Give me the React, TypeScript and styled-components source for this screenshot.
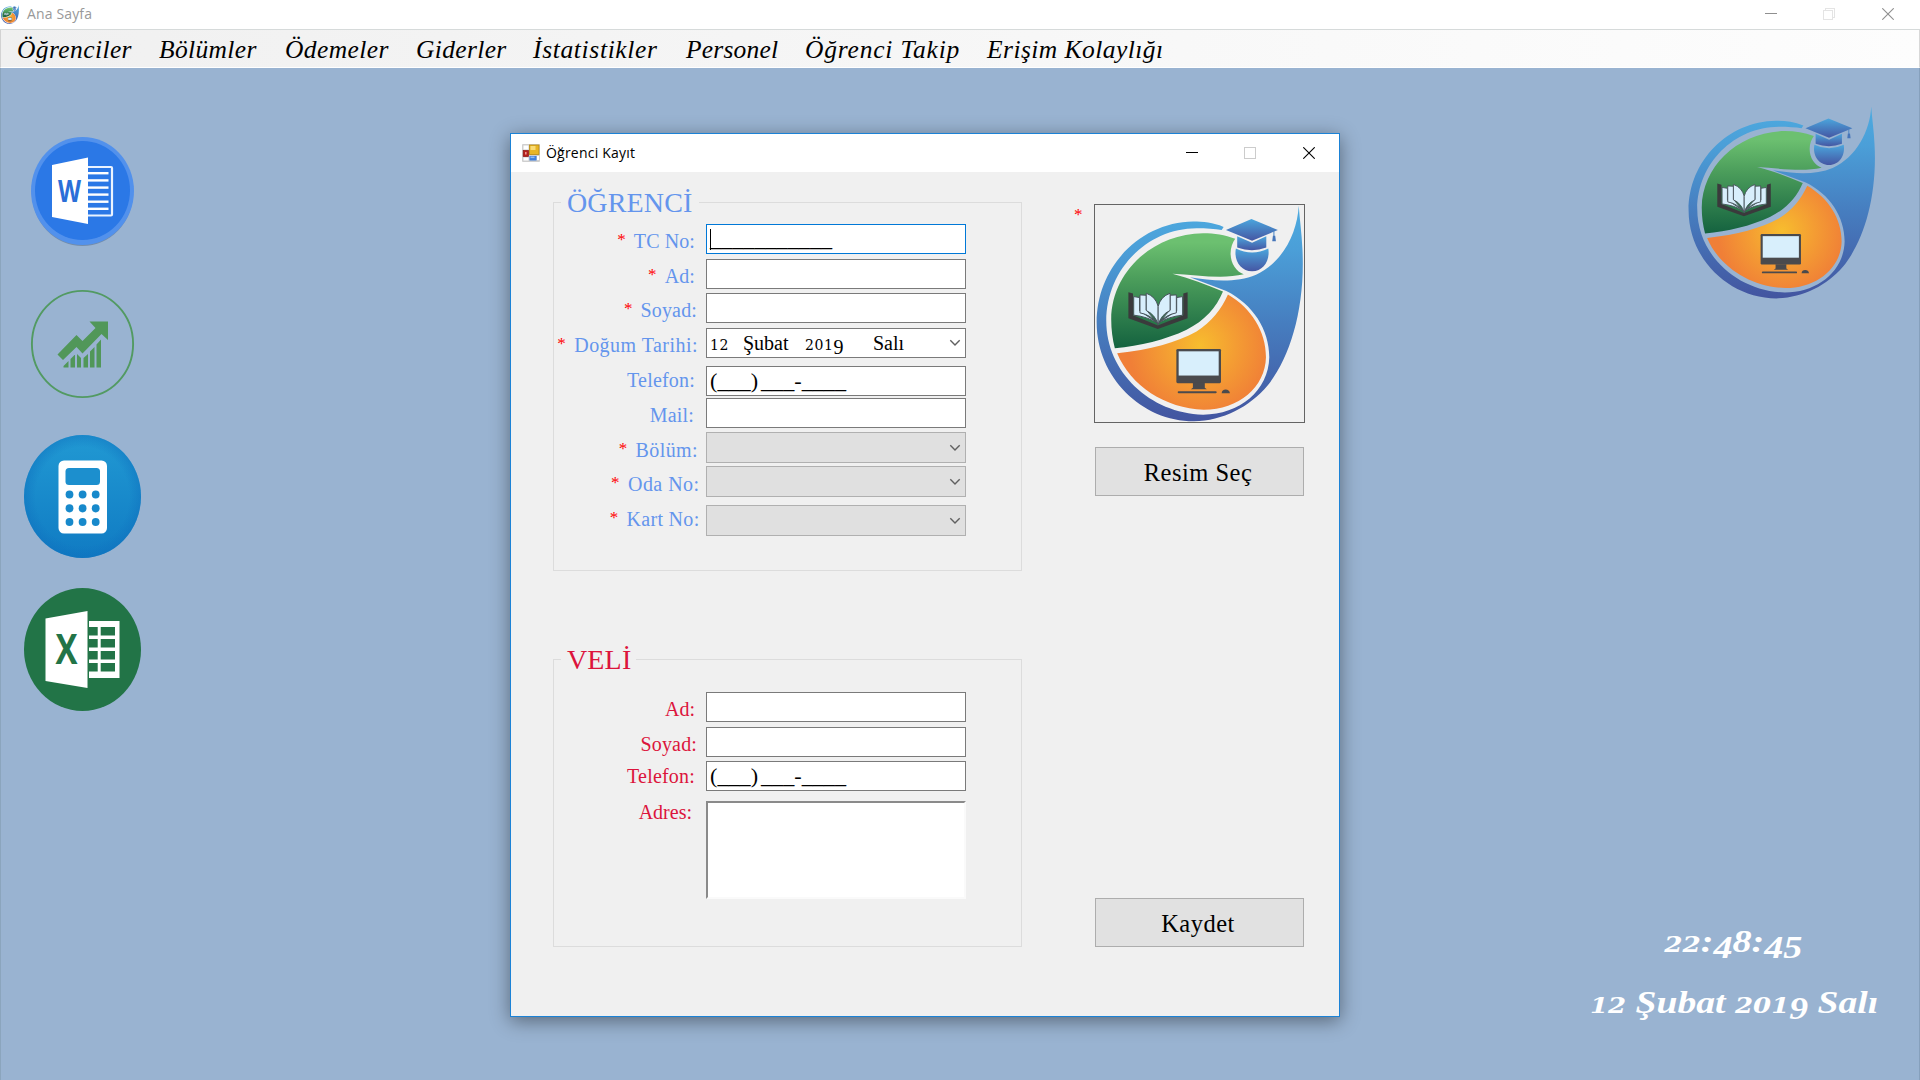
import React from "react";
import styled, { createGlobalStyle } from "styled-components";

const serif = `"Liberation Serif", "Times New Roman", serif`;
const sans = `"Open Sans", "Noto Sans", sans-serif`;

const GlobalStyle = createGlobalStyle`
  * { box-sizing: border-box; }
  body { margin: 0; background: #99b3d1; overflow: hidden; }
`;

const Screen = styled.div`
  width: 1920px;
  height: 1080px;
  display: flex;
  flex-direction: column;
  font-family: ${serif};
  background: #99b3d1;
  overflow: hidden;
`;

const MainTitleBar = styled.header`
  display: flex;
  align-items: center;
  height: 30px;
  padding: 0 3px 1px 1px;
  background: #fff;
  border-bottom: 1px solid #d6dada;
`;

const TitleText = styled.span<{ $color: string; $gap: number; $spacing: number }>`
  flex: 1;
  margin-left: ${(p) => p.$gap}px;
  padding-bottom: 1px;
  font-family: ${sans};
  font-size: 14px;
  letter-spacing: ${(p) => p.$spacing}px;
  color: ${(p) => p.$color};
`;

const WindowButton = styled.span`
  width: 58.5px;
  height: 100%;
  display: flex;
  align-items: center;
  justify-content: center;
`;

const MenuBar = styled.nav`
  display: flex;
  align-items: center;
  height: 38px;
  padding: 2px 0 0 16px;
  border-left: 1px solid #d2d2d2;
  border-right: 1px solid #d8d8d8;
  border-bottom: 1px solid #fff;
  background: linear-gradient(90deg, #f0f0f0, #fdfdfd);
`;

const MenuItem = styled.span<{ $width: number; $spacing: number }>`
  width: ${(p) => p.$width}px;
  white-space: nowrap;
  font-size: 25.5px;
  font-style: italic;
  line-height: 34px;
  letter-spacing: ${(p) => p.$spacing}px;
  color: #000;
`;

const Desktop = styled.main`
  position: relative;
  flex: 1;
  display: flex;
  justify-content: space-between;
  border-left: 1px solid #8ba5bd;
  border-right: 1px solid #86a0bc;
`;

const Shortcuts = styled.aside`
  display: flex;
  flex-direction: column;
  align-items: center;
  width: 163px;
  padding-top: 69px;
`;

const Shortcut = styled.div<{ $w: number; $h: number; $after: number }>`
  width: ${(p) => p.$w}px;
  height: ${(p) => p.$h}px;
  margin-bottom: ${(p) => p.$after}px;
  svg { display: block; width: 100%; height: 100%; overflow: visible; }
`;

const InfoColumn = styled.aside`
  display: flex;
  flex-direction: column;
  align-items: flex-end;
  width: 400px;
  padding: 38px 43px 47px 0;
`;

const BrandMark = styled.div`
  width: 188px;
  height: 193px;
`;

const Clock = styled.div`
  margin-top: auto;
  display: flex;
  flex-direction: column;
  color: #fff;
  font-size: 31px;
  font-weight: bold;
  font-style: italic;
  line-height: 61px;
  white-space: nowrap;
`;

const ClockLine = styled.div<{ $shift: number; $stretch: number }>`
  align-self: flex-end;
  height: 61px;
  margin-right: ${(p) => p.$shift}px;
  transform: scaleX(${(p) => p.$stretch});
  transform-origin: right center;
`;

const LowDigits = styled.span`
  font-family: "DejaVu Serif", ${serif};
  font-size: 0.69em;
  line-height: 1;
`;

const DateDigits = styled(LowDigits)`
  font-size: 0.7em;
  letter-spacing: 0.6px;
`;

const DropDigits = styled.span`
  position: relative;
  top: 0.18em;
`;

const Dialog = styled.section`
  position: absolute;
  left: 509px;
  top: 65px;
  width: 830px;
  height: 884px;
  display: flex;
  flex-direction: column;
  border: 1px solid #1b82d6;
  background: #f0f0f0;
  box-shadow: 0 4px 18px rgba(0, 0, 0, 0.42);
`;

const DialogTitleBar = styled.header`
  display: flex;
  align-items: center;
  height: 38px;
  padding: 0 1px 0 11px;
  background: #fff;
`;

const DialogBody = styled.div`
  flex: 1;
  display: flex;
  padding-left: 42px;
`;

const FormColumn = styled.div`
  display: flex;
  flex-direction: column;
  width: 469px;
  padding-top: 13px;
`;

const Group = styled.fieldset<{ $height: number; $color: string; $before: number }>`
  height: ${(p) => p.$height}px;
  min-width: 0;
  margin: ${(p) => p.$before}px 0 0;
  padding: 0;
  border: 1px solid #dcdcdc;
  color: ${(p) => p.$color};
`;

const GroupTitle = styled.legend<{ $width: number }>`
  width: ${(p) => p.$width}px;
  height: 35px;
  margin-left: 7px;
  padding: 1px 0 0 6px;
  font-size: 28px;
  letter-spacing: 0.15px;
  line-height: 33px;
  white-space: nowrap;
`;

const Row = styled.div<{ $before: number; $height: number }>`
  display: flex;
  height: ${(p) => p.$height}px;
  margin-top: ${(p) => p.$before}px;
`;

const Label = styled.label<{ $top: number; $right: number; $spacing: number }>`
  display: flex;
  justify-content: flex-end;
  width: 152px;
  margin-top: ${(p) => p.$top}px;
  padding-right: ${(p) => p.$right}px;
  font-size: 20px;
  line-height: 24px;
  letter-spacing: ${(p) => p.$spacing}px;
  white-space: nowrap;
`;

const Star = styled.span`
  margin: -1px 8px 0 0;
  font-size: 17px;
  line-height: 23px;
  color: #ff0000;
`;

const Field = styled.div<{ $focus?: boolean; $disabled?: boolean }>`
  display: flex;
  align-items: center;
  width: 260px;
  height: 100%;
  padding: 0 4px 0 3px;
  border: 1px solid ${(p) => (p.$focus ? "#0078d7" : p.$disabled ? "#b0b0b0" : "#7a7a7a")};
  background: ${(p) => (p.$disabled ? "#e0e0e0" : "#fff")};
  color: #000;
  font-size: 20px;
`;

const AddressField = styled.div`
  width: 260px;
  height: 100%;
  border: 2px solid;
  border-color: #8a8a8a #fafafa #fafafa #8a8a8a;
  background: #fff;
`;

const Mask = styled.span`
  line-height: 26px;
  word-spacing: -2.4px;
  transform: scaleX(1.11);
  transform-origin: left center;
  white-space: pre;
`;

const PhoneMask = styled(Mask)`
  padding-bottom: 1px;
`;

const Caret = styled.span`
  width: 1px;
  height: 21px;
  margin-right: -1px;
  background: #000;
`;

const DatePart = styled.span<{ $width: number }>`
  width: ${(p) => p.$width}px;
  line-height: 26px;
  white-space: nowrap;
`;

const Arrow = styled.svg`
  display: block;
  width: 12px;
  height: 8px;
  margin: 0 0 0 auto;
`;

const SideColumn = styled.div`
  display: flex;
  flex-direction: column;
  padding: 32px 0 0 52px;
`;

const PhotoRow = styled.div`
  display: flex;
`;

const PhotoStar = styled(Star)`
  width: 12px;
  margin-right: 8px;
`;

const Photo = styled.div`
  width: 211px;
  height: 219px;
  padding-left: 1px;
  border: 1px solid #646464;
`;

const PushButton = styled.button<{ $before: number }>`
  width: 209px;
  height: 49px;
  margin: ${(p) => p.$before}px 0 0 21px;
  padding: 2px 3px 0 0;
  border: 1px solid #adadad;
  background: #e1e1e1;
  color: #000;
  font-family: ${serif};
  font-size: 24.5px;
  letter-spacing: 0.5px;
`;

const LogoSvg = styled.svg`
  display: block;
  width: 100%;
  height: 100%;
`;

function Logo({ id }: { id: string }) {
  return (
    <LogoSvg viewBox="136 256 629 654" preserveAspectRatio="none">
      <defs>
        <linearGradient id={`${id}-blue`} x1="0" y1="0" x2="0" y2="1">
          <stop offset="0" stopColor="#4dabe0" />
          <stop offset="0.2" stopColor="#4b9fd8" />
          <stop offset="0.55" stopColor="#467dbf" />
          <stop offset="1" stopColor="#4355a0" />
        </linearGradient>
        <linearGradient id={`${id}-cap`} x1="0" y1="0" x2="0" y2="1">
          <stop offset="0" stopColor="#4ba6dd" />
          <stop offset="1" stopColor="#4556a3" />
        </linearGradient>
        <linearGradient id={`${id}-green`} x1="0" y1="0" x2="0" y2="1">
          <stop offset="0.08" stopColor="#6cc070" />
          <stop offset="0.4" stopColor="#4b9d5b" />
          <stop offset="1" stopColor="#14623f" />
        </linearGradient>
        <radialGradient id={`${id}-orange`} cx="450" cy="680" r="215" gradientUnits="userSpaceOnUse">
          <stop offset="0" stopColor="#f7bd2e" />
          <stop offset="0.5" stopColor="#f49d33" />
          <stop offset="1" stopColor="#f07f37" />
        </radialGradient>
      </defs>
      <path
        fill={`url(#${id}-blue)`}
        d="M522 322C490 309 460 306 430 306C270 308 138 442 138 610C138 775 275 908 432 908C520 906 600 865 655 800C725 715 770 560 760 385C758 340 752 300 749 258C745 340 700 430 620 466C560 491 490 485 420 474L530 515C610 555 660 630 660 715C658 815 570 888 460 888C300 884 167 760 167 605C168 450 290 327 440 326C470 326 495 328 516 331Z"
      />
      <path
        fill={`url(#${id}-green)`}
        d="M557 358C525 346 495 341 460 341C305 343 183 460 182 600C182 632 186 660 193 688C270 680 345 663 410 632C465 605 500 565 520 517C470 496 420 476 367 463C440 467 520 480 583 465C560 457 543 432 543 402C543 385 549 369 557 358Z"
      />
      <path
        fill={`url(#${id}-orange)`}
        d="M200 703C300 692 380 670 440 637C485 610 515 570 535 526C605 567 650 636 650 715C648 805 568 873 462 873C345 870 240 800 200 703Z"
      />
      <path fill={`url(#${id}-cap)`} d="M529 331L606 298L686 331L608 364Z" />
      <path fill={`url(#${id}-cap)`} d="M563 350L608 370L651 350V384Q608 400 563 384Z" />
      <path fill={`url(#${id}-cap)`} d="M559 387Q608 411 657 387C663 424 642 455 608 456C574 455 552 424 559 387Z" />
      <path stroke="#4681c3" strokeWidth="3" d="M674 335V350" />
      <path fill="#4675b9" d="M671 349h7l2 16h-11Z" />
      <path fill="#3a3a3c" d="M234 519L248 523V588L323 619L400 588V523L413 519V597L323 630L234 597Z" />
      <g fill="#d8effc" stroke="#48525a" strokeWidth="3" strokeLinejoin="round">
        <path d="M250 532L268 535V575L323 612Q290 592 250 588Z" />
        <path d="M398 532L380 535V575L323 612Q357 592 398 588Z" />
        <path d="M269 527L288 528V572L323 614Q302 587 269 581Z" />
        <path d="M379 527L360 528V572L323 614Q346 587 379 581Z" />
        <path d="M288 522Q317 532 324 562V617Q315 586 288 574Z" />
        <path d="M360 522Q331 532 324 562V617Q333 586 360 574Z" />
      </g>
      <rect x="379" y="690" width="135" height="103" rx="4" fill="#4a4a4d" />
      <rect x="386" y="697" width="121" height="73" fill="#d8effc" />
      <path fill="#4a4a4d" d="M429 792h36v15l6 4h-48l6-4Z" />
      <rect x="383" y="817" width="118" height="6" rx="3" fill="#4a4a4d" />
      <path fill="#4a4a4d" d="M516 823Q517 812 528 812Q539 812 541 823Z" />
    </LogoSvg>
  );
}

function WordIcon() {
  return (
    <svg viewBox="0 0 103 108" preserveAspectRatio="none">
      <ellipse cx="51.5" cy="56" rx="50.5" ry="53" fill="#5b7391" opacity="0.6" />
      <ellipse cx="51.5" cy="54" rx="51.5" ry="54" fill="#5291ec" />
      <ellipse cx="51.5" cy="53.5" rx="47.5" ry="49.5" fill="#2b78e6" />
      <rect x="50" y="30" width="31" height="48.5" rx="1" fill="#2b78e6" stroke="#eaf3ff" strokeWidth="2.2" />
      {[36, 43.2, 50.4, 57.4, 64.5, 71.6].map((y) => (
        <rect key={y} x="56" y={y - 1} width="21.5" height="2.4" fill="#fff" />
      ))}
      <path fill="#fff" d="M21 28L57 20.500V87L21 80Z" />
      <text x="27" y="64.500" fontFamily="Open Sans" fontWeight="bold" fontSize="30" textLength="23" lengthAdjust="spacingAndGlyphs" fill="#2b6fd8">W</text>
    </svg>
  );
}

function GrowthIcon() {
  return (
    <svg viewBox="0 0 103 108" preserveAspectRatio="none">
      <ellipse cx="51.5" cy="54" rx="50.6" ry="53.100" fill="none" stroke="#529a62" strokeWidth="1.9" />
      <g fill="#519759">
        <path d="M26.500 64.500L45.500 45L51.500 51L64.500 38L58.500 31.500H77V50L70.500 44L51.500 63.500L45.500 57L32 70Z" />
        <path d="M32.500 77.500V76L37.500 71V77.500ZM39.500 77.500V69L43.500 65L44 65V77.500ZM46 77.500V64L50 68V77.500ZM52.500 77.500V68L57 64V77.500ZM59 77.500V61.500L63.500 57V77.500ZM65.500 77.500V54.500L70 49.500V77.500Z" />
      </g>
    </svg>
  );
}

function CalculatorIcon() {
  return (
    <svg viewBox="0 0 117 123" preserveAspectRatio="none">
      <defs>
        <linearGradient id="calc-face" x1="0" y1="0" x2="0" y2="1">
          <stop offset="0" stopColor="#2199d3" />
          <stop offset="1" stopColor="#107bc3" />
        </linearGradient>
        <radialGradient id="calc-edge">
          <stop offset="0.8" stopColor="#0f6fbd" stopOpacity="0" />
          <stop offset="1" stopColor="#0f6fbd" stopOpacity="0.45" />
        </radialGradient>
      </defs>
      <ellipse cx="58.5" cy="61.5" rx="58.5" ry="61.5" fill="url(#calc-face)" />
      <ellipse cx="58.5" cy="61.5" rx="58.5" ry="61.5" fill="url(#calc-edge)" />
      <rect x="34.500" y="25.500" width="48.500" height="73" rx="5.500" fill="#fff" />
      <rect x="41.500" y="33" width="34.500" height="17" rx="3.500" fill="#1c8fce" />
      {[59.5, 73.300, 87].map((y) =>
        [45.5, 58.600, 71.700].map((x) => <ellipse key={`${x}-${y}`} cx={x} cy={y} rx="3.9" ry="4.100" fill="#1789cb" />)
      )}
    </svg>
  );
}

function ExcelIcon() {
  return (
    <svg viewBox="0 0 117 123" preserveAspectRatio="none">
      <ellipse cx="58.5" cy="61.5" rx="58.5" ry="61.5" fill="#227447" />
      <rect x="65" y="33" width="30.500" height="57" fill="#fff" />
      {[39, 51, 63, 75].map((y) => (
        <g key={y} fill="#227447">
          <rect x="65" y={y} width="8.700" height="8.500" />
          <rect x="76.700" y={y} width="14.300" height="8.500" />
        </g>
      ))}
      <rect x="62" y="30" width="3" height="62" fill="#227447" />
      <path fill="#fff" d="M21.500 30.500L63.500 23V100L21.500 93Z" />
      <text x="31.500" y="76" fontFamily="Open Sans" fontWeight="bold" fontSize="41" textLength="22" lengthAdjust="spacingAndGlyphs" fill="#227447">X</text>
    </svg>
  );
}

const SmallLogo = styled.div`
  width: 18px;
  height: 19px;
`;

function FormIcon() {
  return (
    <svg width="18" height="18" viewBox="0 0 18 18">
      <rect width="18" height="18" rx="1" fill="#cfcfcf" />
      <path fill="#fff" d="M1.500 1.500h5v4h-5zM1.500 13.500h5v3h-5zM15 12h2v4h-2z" />
      <rect x="7.500" y="1" width="9.500" height="9.500" fill="#e7b526" stroke="#b98a10" strokeWidth="0.8" />
      <rect x="8.500" y="2" width="5" height="4" fill="#f9dc76" />
      <rect x="1.200" y="6.500" width="5.300" height="6" fill="#b5201c" stroke="#8c1512" strokeWidth="0.7" />
      <rect x="3" y="8" width="1.600" height="2.500" fill="#e9958f" />
      <rect x="7.500" y="12" width="7" height="4.500" fill="#3f7fdc" />
      <rect x="8.500" y="12.500" width="4" height="1.600" fill="#8db8f2" />
    </svg>
  );
}

function WindowControls({ color, faint, restored }: { color: string; faint: string; restored?: boolean }) {
  return (
    <>
      <WindowButton>
        <svg width="12" height="12" shapeRendering="crispEdges"><rect y="5" width="12" height="1" fill={color} /></svg>
      </WindowButton>
      <WindowButton>
        <svg width="12" height="12" fill="none" stroke={faint} shapeRendering="crispEdges">
          {restored ? <path d="M0.500 2.500h9v9h-9zM2.500 2.500v-2h9v9h-2" /> : <rect x="0.5" y="0.5" width="11" height="11" />}
        </svg>
      </WindowButton>
      <WindowButton>
        <svg width="12" height="12" stroke={color} strokeWidth="1.1"><path d="M0.300 0.300L11.700 11.700M11.700 0.300L0.300 11.700" /></svg>
      </WindowButton>
    </>
  );
}

function Chevron() {
  return (
    <Arrow viewBox="0 0 12 8"><path d="M1.300 1.300L6 6L10.700 1.300" fill="none" stroke="#606060" strokeWidth="1.4" /></Arrow>
  );
}

type RowSpec = {
  label: string;
  before: number;
  height: number;
  top: number;
  right: number;
  spacing?: number;
  required?: boolean;
  kind?: "text" | "tc" | "date" | "phone" | "select" | "address";
};

const studentRows: RowSpec[] = [
  { label: "TC No:", before: 4, height: 30, top: 5, right: 11, spacing: 0.1, required: true, kind: "tc" },
  { label: "Ad:", before: 5, height: 30, top: 5, right: 11, spacing: 0.1, required: true },
  { label: "Soyad:", before: 4, height: 30, top: 5, right: 9, spacing: 0.15, required: true },
  { label: "Doğum Tarihi:", before: 5, height: 30, top: 5, right: 8, spacing: 0.47, required: true, kind: "date" },
  { label: "Telefon:", before: 8, height: 30, top: 2, right: 11, spacing: 0.2, kind: "phone" },
  { label: "Mail:", before: 2, height: 30, top: 5, right: 12, spacing: 0.2 },
  { label: "Bölüm:", before: 4, height: 31, top: 6, right: 8, spacing: 0.4, required: true, kind: "select" },
  { label: "Oda No:", before: 3, height: 31, top: 6, right: 6.5, spacing: 0.45, required: true, kind: "select" },
  { label: "Kart No:", before: 8, height: 31, top: 2, right: 6.5, spacing: 0.3, required: true, kind: "select" },
];

const parentRows: RowSpec[] = [
  { label: "Ad:", before: 15, height: 30, top: 5, right: 11 },
  { label: "Soyad:", before: 5, height: 30, top: 5, right: 9, spacing: 0.15 },
  { label: "Telefon:", before: 4, height: 30, top: 3, right: 11, spacing: 0.2, kind: "phone" },
  { label: "Adres:", before: 10, height: 98, top: -1, right: 14, kind: "address" },
];

function FieldFor({ kind }: { kind?: RowSpec["kind"] }) {
  switch (kind) {
    case "tc":
      return <Field $focus><Caret /><Mask>___________</Mask></Field>;
    case "phone":
      return <Field><PhoneMask>(___) ___-____</PhoneMask></Field>;
    case "select":
      return <Field $disabled><Chevron /></Field>;
    case "address":
      return <AddressField />;
    case "date":
      return (
        <Field>
          <DatePart $width={33}><DateDigits>12</DateDigits></DatePart>
          <DatePart $width={62}>Şubat</DatePart>
          <DatePart $width={68}><DateDigits>201</DateDigits><DropDigits>9</DropDigits></DatePart>
          <DatePart $width={40}>Salı</DatePart>
          <Chevron />
        </Field>
      );
    default:
      return <Field />;
  }
}

function FormRow({ row }: { row: RowSpec }) {
  return (
    <Row $before={row.before} $height={row.height}>
      <Label $top={row.top} $right={row.right} $spacing={row.spacing ?? 0}>
        {row.required && <Star>*</Star>}
        {row.label}
      </Label>
      <FieldFor kind={row.kind} />
    </Row>
  );
}

const menu = [
  { text: "Öğrenciler", width: 142, spacing: 0.4 },
  { text: "Bölümler", width: 126, spacing: 0.35 },
  { text: "Ödemeler", width: 131, spacing: 0.4 },
  { text: "Giderler", width: 117, spacing: 0.35 },
  { text: "İstatistikler", width: 153, spacing: 0.65 },
  { text: "Personel", width: 119, spacing: 0.2 },
  { text: "Öğrenci Takip", width: 182, spacing: 0.8 },
  { text: "Erişim Kolaylığı", width: 190, spacing: 0.45 },
];

export default function App() {
  return (
    <Screen>
      <GlobalStyle />
      <MainTitleBar>
        <SmallLogo><Logo id="small" /></SmallLogo>
        <TitleText $color="#999" $gap={8} $spacing={0.15}>Ana Sayfa</TitleText>
        <WindowControls color="#8f8f8f" faint="#e4e4e4" restored />
      </MainTitleBar>
      <MenuBar>
        {menu.map((m) => (
          <MenuItem key={m.text} $width={m.width} $spacing={m.spacing}>{m.text}</MenuItem>
        ))}
      </MenuBar>
      <Desktop>
        <Shortcuts>
          <Shortcut $w={103} $h={108} $after={45}><WordIcon /></Shortcut>
          <Shortcut $w={103} $h={108} $after={37}><GrowthIcon /></Shortcut>
          <Shortcut $w={117} $h={123} $after={30}><CalculatorIcon /></Shortcut>
          <Shortcut $w={117} $h={123} $after={0}><ExcelIcon /></Shortcut>
        </Shortcuts>
        <InfoColumn>
          <BrandMark><Logo id="brand" /></BrandMark>
          <Clock>
            <ClockLine $shift={74} $stretch={1.23}>
              <LowDigits>22</LowDigits>:<DropDigits>4</DropDigits>8:<DropDigits>45</DropDigits>
            </ClockLine>
            <ClockLine $shift={-2} $stretch={1.215}>
              <LowDigits>12</LowDigits> Şubat <LowDigits>201</LowDigits><DropDigits>9</DropDigits> Salı
            </ClockLine>
          </Clock>
        </InfoColumn>
        <Dialog>
          <DialogTitleBar>
            <FormIcon />
            <TitleText $color="#000" $gap={6} $spacing={0.22}>Öğrenci Kayıt</TitleText>
            <WindowControls color="#000" faint="#ccc" />
          </DialogTitleBar>
          <DialogBody>
            <FormColumn>
              <Group $height={386} $color="#6495ed" $before={0}>
                <GroupTitle $width={138}>ÖĞRENCİ</GroupTitle>
                {studentRows.map((r) => <FormRow key={r.label} row={r} />)}
              </Group>
              <Group $height={305} $color="#dc143c" $before={71}>
                <GroupTitle $width={75}>VELİ</GroupTitle>
                {parentRows.map((r) => <FormRow key={r.label} row={r} />)}
              </Group>
            </FormColumn>
            <SideColumn>
              <PhotoRow>
                <PhotoStar>*</PhotoStar>
                <Photo><Logo id="photo" /></Photo>
              </PhotoRow>
              <PushButton $before={24}>Resim Seç</PushButton>
              <PushButton $before={402}>Kaydet</PushButton>
            </SideColumn>
          </DialogBody>
        </Dialog>
      </Desktop>
    </Screen>
  );
}
